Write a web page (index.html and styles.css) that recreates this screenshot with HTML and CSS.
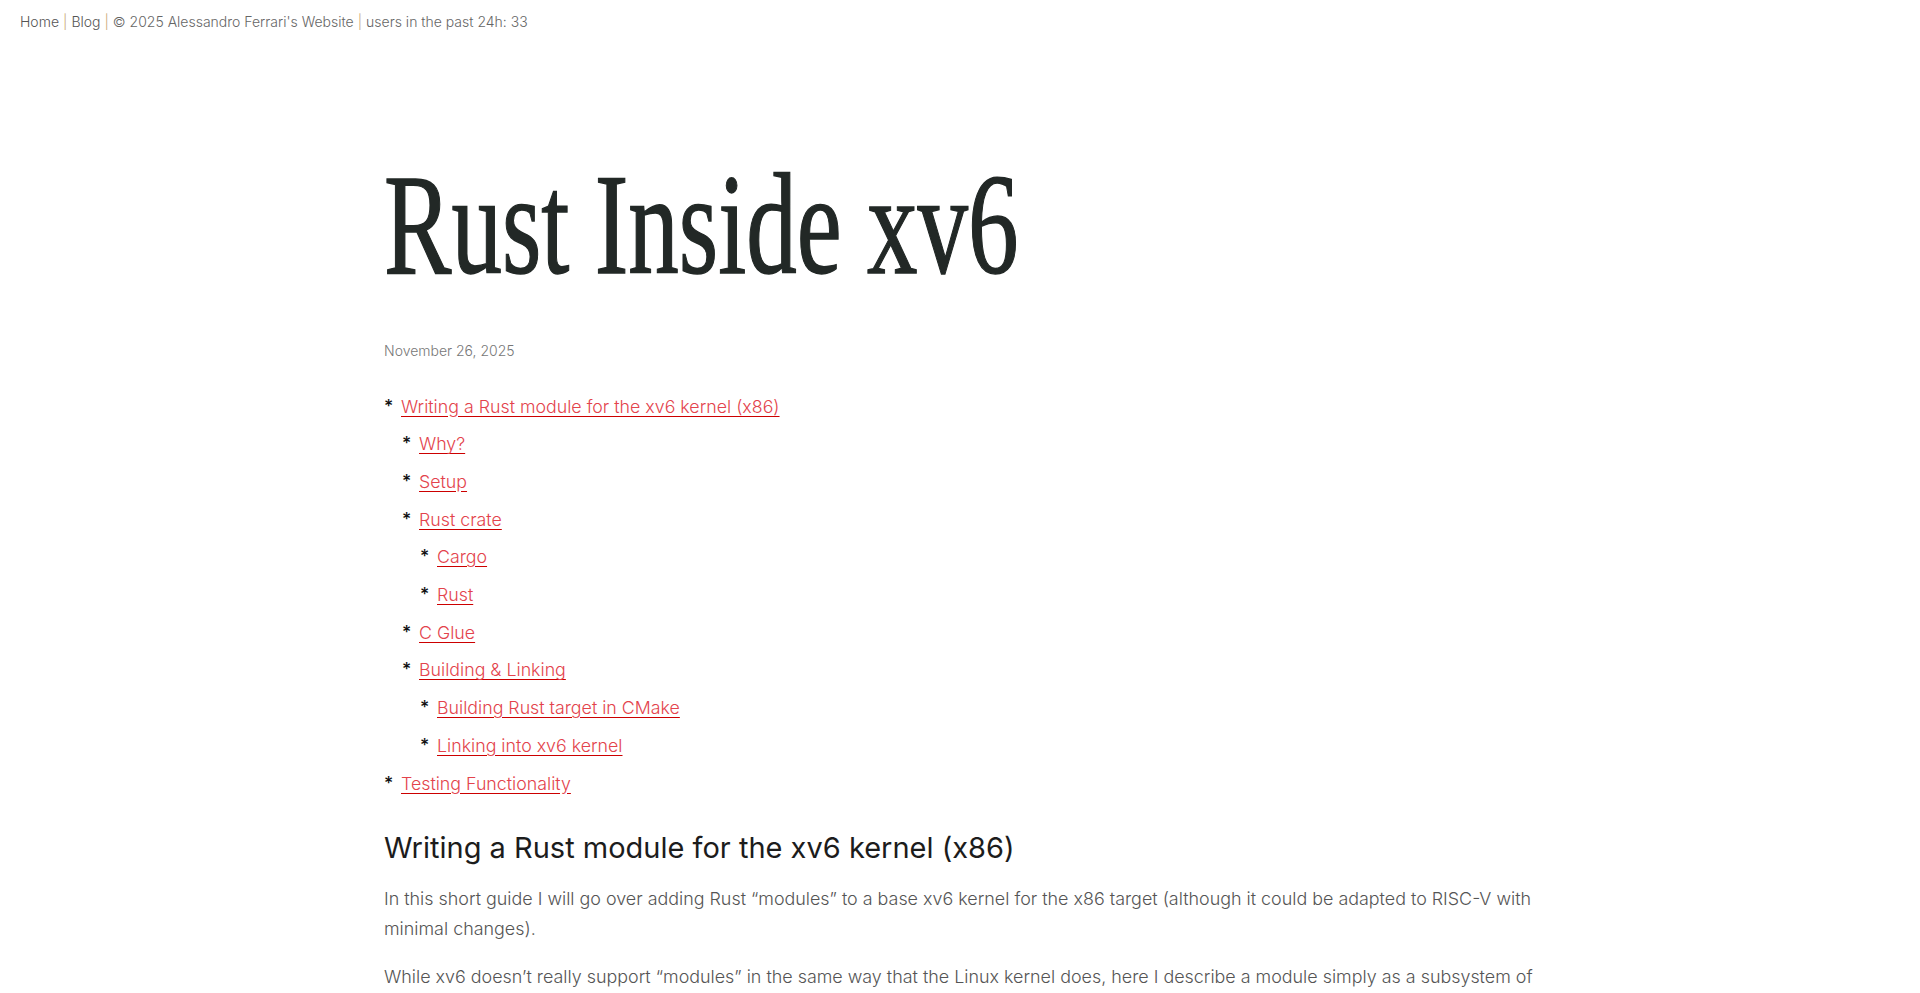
FILE: index.html
```html
<!DOCTYPE html>
<html lang="en">
<head>
<meta charset="utf-8">
<title>Rust Inside xv6</title>
<link rel="stylesheet" href="styles.css">
</head>
<body>
<nav class="topnav">
  <a href="#" class="navlink">Home</a><span class="sep">|</span><a href="#" class="navlink">Blog</a><span class="sep">|</span><span>© 2025 Alessandro Ferrari's Website</span><span class="sep">|</span><span>users in the past 24h: 33</span>
</nav>
<main class="page">
  <h1 class="title"><span class="title-text">Rust Inside xv6</span></h1>
  <p class="date">November 26, 2025</p>
  <ul class="toc">
    <li><a href="#">Writing a Rust module for the xv6 kernel (x86)</a>
      <ul class="toc">
        <li><a href="#">Why?</a></li>
        <li><a href="#">Setup</a></li>
        <li><a href="#">Rust crate</a>
          <ul class="toc">
            <li><a href="#">Cargo</a></li>
            <li><a href="#">Rust</a></li>
          </ul>
        </li>
        <li><a href="#">C Glue</a></li>
        <li><a href="#">Building &amp; Linking</a>
          <ul class="toc">
            <li><a href="#">Building Rust target in CMake</a></li>
            <li><a href="#">Linking into xv6 kernel</a></li>
          </ul>
        </li>
      </ul>
    </li>
    <li><a href="#">Testing Functionality</a></li>
  </ul>
  <h2 class="section-title">Writing a Rust module for the xv6 kernel (x86)</h2>
  <p class="para">In this short guide I will go over adding Rust “modules” to a base xv6 kernel for the x86 target (although it could be adapted to RISC-V with minimal changes).</p>
  <p class="para">While xv6 doesn’t really support “modules” in the same way that the Linux kernel does, here I describe a module simply as a subsystem of the kernel that is written in Rust and linked statically into the final kernel image.</p>
</main>
</body>
</html>
```

FILE: styles.css
```css
html, body {
  margin: 0;
  padding: 0;
  background: #ffffff;
}

body {
  font-family: Inter, "Noto Sans", "Liberation Sans", sans-serif;
  color: #555555;
  font-weight: 300;
}

.topnav {
  padding: 12px 20px 10px;
  font-size: 14px;
  line-height: 20px;
  color: #666666;
}

.navlink {
  color: #555555;
  text-decoration: none;
}

.sep {
  color: #c9a97a;
  margin: 0 4px;
}

.page {
  box-sizing: border-box;
  max-width: 1184px;
  padding-left: 16px;
  margin: 0 auto;
}

.title {
  margin: 111px 0 0 0;
  font-family: "Liberation Serif", "Times New Roman", serif;
  font-weight: 400;
  font-size: 144px;
  line-height: 144px;
  height: 144px;
  color: #222826;
}

.title-text {
  display: inline-block;
  transform: scaleX(0.702);
  transform-origin: left center;
  white-space: nowrap;
  -webkit-text-stroke: 1.4px #222826;
}

.date {
  margin: 44px 0 0 0;
  font-size: 14px;
  line-height: 20px;
  color: #777777;
}

.toc {
  list-style: none;
  margin: 26.5px 0 0 0;
  padding: 0;
  font-size: 17.8px;
}

.toc .toc {
  margin: 0;
  padding-left: 18px;
}

.toc li {
  line-height: 27.7px;
}

.toc li > a {
  display: inline-block;
  padding: 5px 0;
}

.toc li::before {
  content: "*";
  color: #111111;
  font-weight: 500;
  display: inline-block;
  width: 17px;
  vertical-align: top;
  padding-top: 4px;
  line-height: 27.7px;
}

.toc a {
  color: #e3434c;
  text-decoration: underline;
  text-decoration-color: #cc0000;
  text-underline-offset: 3px;
}

.section-title {
  margin: 28px 0 0 0;
  font-size: 29px;
  line-height: 36px;
  font-weight: 400;
  color: #1c1c1c;
}

.para {
  margin: 18px 0 0 0;
  font-size: 17.9px;
  line-height: 30px;
  color: #555555;
}
```
